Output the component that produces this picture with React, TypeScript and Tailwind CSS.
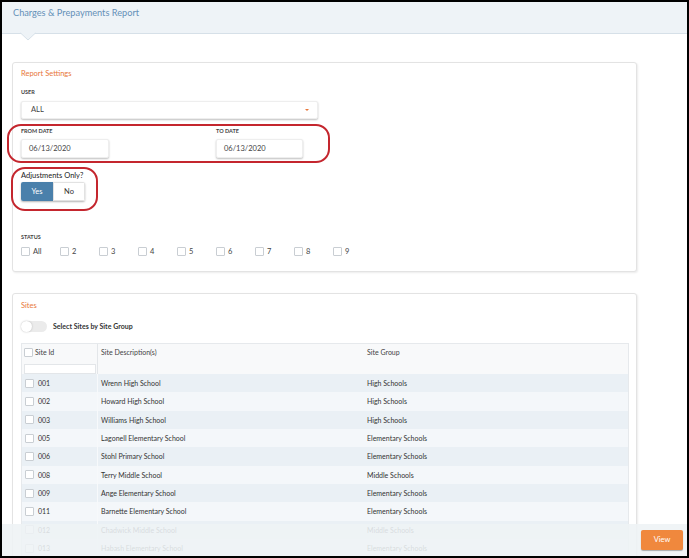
import React from "react";

const rows = [
  ["001", "Wrenn High School", "High Schools"],
  ["002", "Howard High School", "High Schools"],
  ["003", "Williams High School", "High Schools"],
  ["005", "Lagonell Elementary School", "Elementary Schools"],
  ["006", "Stohl Primary School", "Elementary Schools"],
  ["008", "Terry Middle School", "Middle Schools"],
  ["009", "Ange Elementary School", "Elementary Schools"],
  ["011", "Barnette Elementary School", "Elementary Schools"],
  ["012", "Chadwick Middle School", "Middle Schools"],
  ["013", "Habash Elementary School", "Elementary Schools"],
];

const Box = ({ cls = "" }: { cls?: string }) => (
  <span className={"inline-block w-[9px] h-[9px] border border-[#c9ced3] bg-white rounded-[1px] " + cls} />
);

export default function App() {
  return (
    <div
      className="relative w-[689px] h-[558px] border-2 border-black bg-white overflow-hidden text-[#333]"
      style={{ fontFamily: "Lato, 'Open Sans', sans-serif" }}
    >
      {/* header */}
      <div className="relative h-[32px] bg-[#eef3f7] border-b border-[#d6e0e8] flex items-start pt-[6px] pl-[11px]">
        <span className="text-[9.2px] leading-[10px] text-[#6590b8]">Charges &amp; Prepayments Report</span>
        <svg className="absolute left-[18px] top-[30px]" width="16" height="9" viewBox="0 0 16 9">
          <path d="M0 0.5 L8 8 L16 0.5" fill="#eef3f7" stroke="#d6e0e8" strokeWidth="1" />
          <rect x="0" y="-1" width="16" height="1.5" fill="#eef3f7" />
        </svg>
      </div>

      <div className="pl-[10px] pt-[28px] flex flex-col">
        {/* Report Settings card */}
        <div className="relative w-[625px] h-[210px] bg-white border border-[#e3e3e3] rounded-[3px] shadow-[1px_1px_2px_rgba(0,0,0,0.08)] px-[8px] pt-[5px] flex flex-col">
          <div className="text-[7.5px] text-[#e8773a] leading-[12px]">Report Settings</div>
          <div className="mt-[8px] text-[5.5px] font-bold leading-[8px] text-[#444]">USER</div>
          <div className="mt-[5px] w-[297px] h-[18px] bg-white rounded-[2px] shadow-[0_1px_2px_rgba(0,0,0,0.25)] border border-[#eee] flex items-center justify-between pl-[9px] pr-[8px]">
            <span className="text-[7.5px] text-[#444]">ALL</span>
            <span className="w-0 h-0 border-l-[2px] border-r-[2px] border-t-[2px] border-l-transparent border-r-transparent border-t-[#e8773a]" />
          </div>
          <div className="mt-[8px] flex">
            <div className="w-[195px] flex flex-col">
              <div className="text-[5.5px] font-bold leading-[8px] text-[#444]">FROM DATE</div>
              <div className="mt-[4px] w-[88px] h-[19px] bg-white rounded-[2px] shadow-[0_1px_2px_rgba(0,0,0,0.25)] border border-[#eee] flex items-center pl-[7px] text-[7.5px] text-[#444]">06/13/2020</div>
            </div>
            <div className="flex flex-col">
              <div className="text-[5.5px] font-bold leading-[8px] text-[#444]">TO DATE</div>
              <div className="mt-[4px] w-[87px] h-[19px] bg-white rounded-[2px] shadow-[0_1px_2px_rgba(0,0,0,0.25)] border border-[#eee] flex items-center pl-[7px] text-[7.5px] text-[#444]">06/13/2020</div>
            </div>
          </div>
          <div className="mt-[13px] text-[7.5px] leading-[10px] text-[#222]">Adjustments Only?</div>
          <div className="mt-[1px] flex w-[64px] h-[19px] rounded-[2px] shadow-[0_1px_2px_rgba(0,0,0,0.3)] overflow-hidden">
            <div className="w-[32px] bg-[#4a80ab] text-white text-[7.5px] flex items-center justify-center">Yes</div>
            <div className="w-[32px] bg-white text-[#333] text-[7.5px] flex items-center justify-center border border-[#e2e2e2]">No</div>
          </div>
          <div className="mt-[32px] text-[5.5px] font-bold leading-[8px] text-[#444]">STATUS</div>
          <div className="mt-[5px] flex">
            {["All", "2", "3", "4", "5", "6", "7", "8", "9"].map((s) => (
              <div key={s} className="w-[39px] flex items-center gap-[3px]">
                <Box />
                <span className="text-[7.5px] text-[#444]">{s}</span>
              </div>
            ))}
          </div>

          {/* red outlines */}
          <div className="absolute left-[-6px] top-[61px] w-[323px] h-[39px] border-2 border-[#c4262e] rounded-[14px]" />
          <div className="absolute left-[-2px] top-[104px] w-[87px] h-[44px] border-2 border-[#c4262e] rounded-[14px]" />
        </div>

        {/* Sites card */}
        <div className="mt-[21px] w-[625px] h-[300px] bg-white border border-[#e3e3e3] rounded-[3px] shadow-[1px_1px_2px_rgba(0,0,0,0.08)] px-[8px] pt-[6px] flex flex-col">
          <div className="text-[7.5px] text-[#e8773a] leading-[12px]">Sites</div>
          <div className="mt-[9px] flex items-center">
            <div className="relative w-[26px] h-[11px] rounded-full bg-[#ebebeb]">
              <span className="absolute left-0 top-0 w-[11px] h-[11px] rounded-full bg-white shadow-[0_0_2px_rgba(0,0,0,0.25)]" />
            </div>
            <span className="ml-[6px] text-[7px] font-bold text-[#333]">Select Sites by Site Group</span>
          </div>
          <div className="mt-[11px] w-[608px] border border-[#e6e9ec] flex flex-col">
            <div className="h-[30px] bg-[#f8f9fa] flex">
              <div className="w-[76px] border-r border-[#e3e6e9] pl-[2px] pt-[3px] flex flex-col">
                <div className="flex items-center gap-[2px]">
                  <Box />
                  <span className="text-[7px] text-[#444]">Site Id</span>
                </div>
                <div className="mt-[6px] w-[72px] h-[15px] bg-white border border-[#e3e6e9]" />
              </div>
              <div className="w-[266px] pl-[3px] pt-[3px] text-[7px] text-[#444]">Site Description(s)</div>
              <div className="pl-[3px] pt-[3px] text-[7px] text-[#444]">Site Group</div>
            </div>
            {rows.map((r, i) => (
              <div key={r[0]} className={"h-[18.33px] flex items-center " + (i % 2 === 0 ? "bg-[#eaf0f5]" : "bg-[#f4f7fa]")}>
                <div className="w-[76px] h-full border-r border-[#f7f9fb] pl-[3px] flex items-center gap-[4px]">
                  <Box />
                  <span className="text-[7px] text-[#333]">{r[0]}</span>
                </div>
                <div className="w-[266px] pl-[3px] text-[7px] text-[#333]">{r[1]}</div>
                <div className="pl-[3px] text-[7px] text-[#333]">{r[2]}</div>
              </div>
            ))}
          </div>
        </div>
      </div>

      {/* footer overlay */}
      <div className="absolute left-0 right-0 bottom-0 h-[32px] bg-[rgba(238,242,245,0.88)] flex items-center justify-end pr-[4px]">
        <button className="w-[42px] h-[20px] rounded-[2px] bg-[#f0883d] text-white text-[7.5px] shadow-[0_1px_1px_rgba(0,0,0,0.3)]">View</button>
      </div>
    </div>
  );
}
